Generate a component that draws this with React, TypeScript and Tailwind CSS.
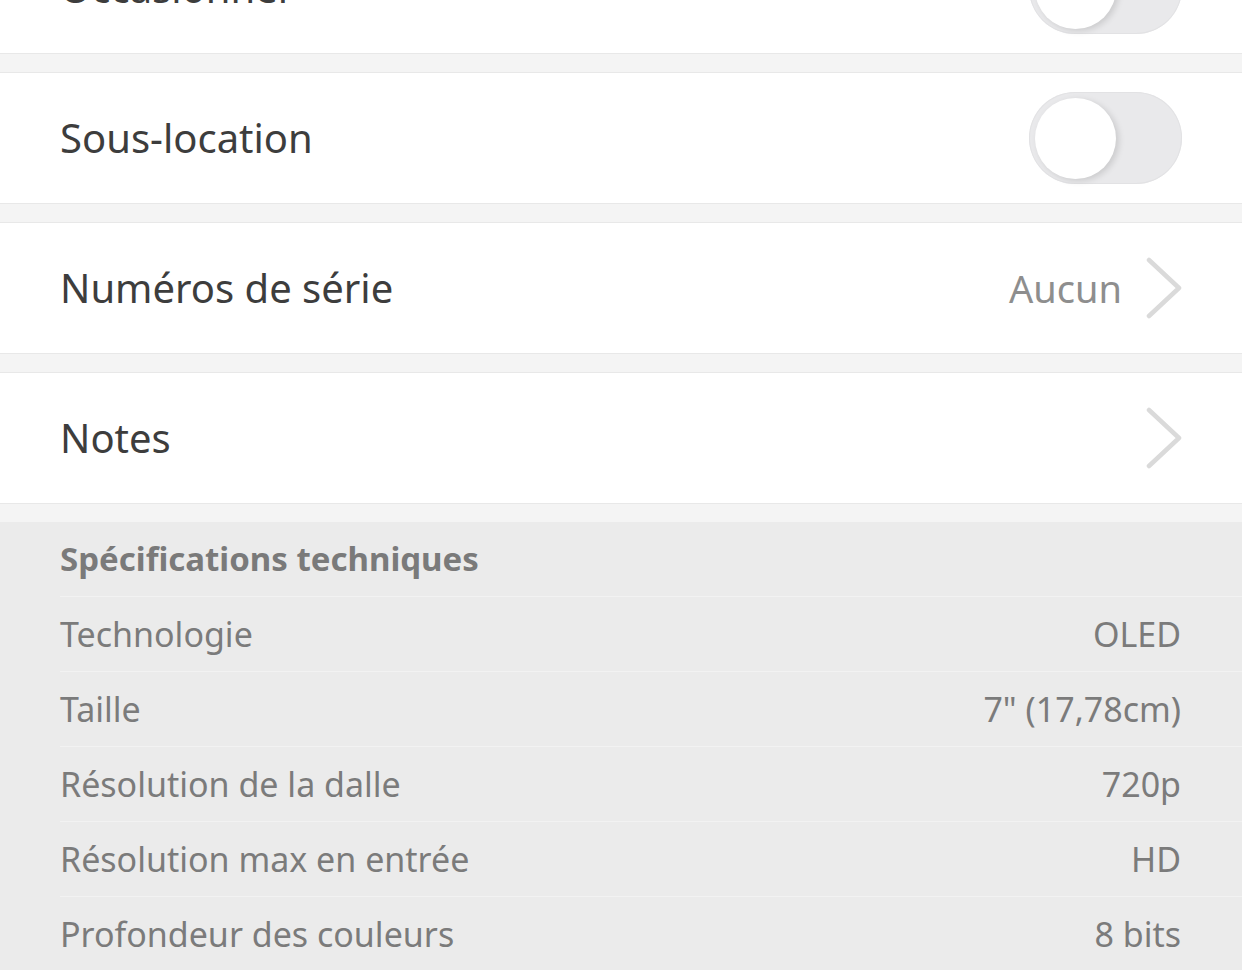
const font = { fontFamily: '"Noto Sans", "Open Sans", sans-serif' };

function Toggle() {
  return (
    <div className="flex h-[92px] w-[153px] items-center rounded-full bg-[#e9e9eb] px-[6px] shadow-[inset_0_0_0_1px_#e2e2e4]">
      <div className="h-[81px] w-[81px] rounded-full bg-white shadow-[3px_2px_6px_rgba(0,0,0,0.13)]" />
    </div>
  );
}

function Chevron() {
  return (
    <svg width="36" height="62" viewBox="0 0 36 62" fill="none">
      <polyline points="3,3 33,31 3,59" stroke="#dadada" strokeWidth="4.5" strokeLinecap="round" strokeLinejoin="round" />
    </svg>
  );
}

function Row({ label, children }: { label: string; children?: React.ReactNode }) {
  return (
    <div className="flex h-[132px] items-center justify-between border-y border-[#e8e8e8] bg-white pl-[60px] pr-[60px]">
      <span className="text-[40px] text-[#3d3d3d]">{label}</span>
      <div className="flex items-center">{children}</div>
    </div>
  );
}

const specs = [
  ["Technologie", "OLED"],
  ["Taille", '7" (17,78cm)'],
  ["Résolution de la dalle", "720p"],
  ["Résolution max en entrée", "HD"],
  ["Profondeur des couleurs", "8 bits"],
];

export default function App() {
  return (
    <div className="h-[970px] overflow-hidden bg-[#f4f4f4]" style={font}>
      <div className="-mt-[78px] flex flex-col gap-[18px]">
        <Row label="Occasionner">
          <Toggle />
        </Row>
        <Row label="Sous-location">
          <Toggle />
        </Row>
        <Row label="Numéros de série">
          <span className="mr-[24px] text-[38px] text-[#8e8e8e]">Aucun</span>
          <Chevron />
        </Row>
        <Row label="Notes">
          <Chevron />
        </Row>
        <div className="bg-[#ebebeb] pb-[200px]">
          <div className="ml-[60px] flex h-[75px] items-center border-b border-[#f2f2f2]">
            <span className="text-[33px] font-bold text-[#7a7a7a]">Spécifications techniques</span>
          </div>
          {specs.map(([k, v]) => (
            <div key={k} className="ml-[60px] flex h-[75px] items-center justify-between border-b border-[#f2f2f2] pr-[61px]">
              <span className="text-[34px] text-[#7b7b7b]">{k}</span>
              <span className="text-[34px] text-[#7b7b7b]">{v}</span>
            </div>
          ))}
        </div>
      </div>
    </div>
  );
}
